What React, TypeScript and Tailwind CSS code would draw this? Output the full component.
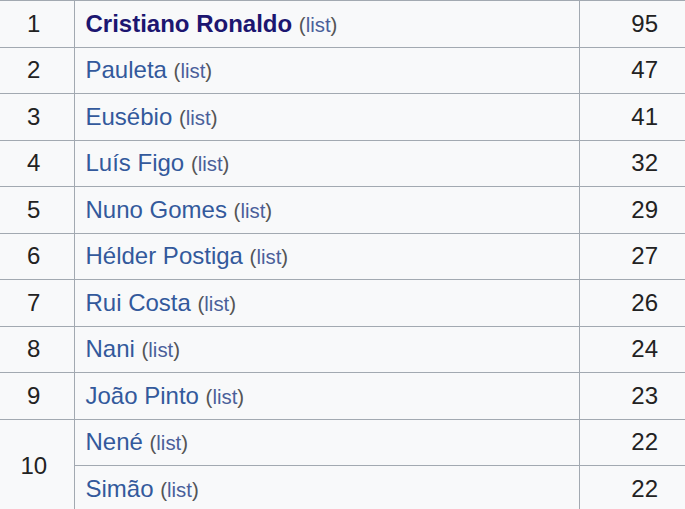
import React from 'react';

type Scorer = { rank?: number; span?: number; name: string; goals: number; bold?: boolean };

const scorers: Scorer[] = [
    { rank: 1, name: 'Cristiano Ronaldo', goals: 95, bold: true },
    { rank: 2, name: 'Pauleta', goals: 47 },
    { rank: 3, name: 'Eusébio', goals: 41 },
    { rank: 4, name: 'Luís Figo', goals: 32 },
    { rank: 5, name: 'Nuno Gomes', goals: 29 },
    { rank: 6, name: 'Hélder Postiga', goals: 27 },
    { rank: 7, name: 'Rui Costa', goals: 26 },
    { rank: 8, name: 'Nani', goals: 24 },
    { rank: 9, name: 'João Pinto', goals: 23 },
    { rank: 10, span: 2, name: 'Nené', goals: 22 },
    { name: 'Simão', goals: 22 },
];

const App: React.FC = () => {
    return (
        <div className="w-[685px] h-[509px] overflow-hidden bg-[#f8f9fa] font-['Liberation_Sans',Arial,sans-serif] text-[24px] text-[#222]">
            <table className="border-collapse w-[685px] table-fixed">
                <colgroup>
                    <col className="w-[74px]" />
                    <col className="w-[505px]" />
                    <col className="w-[106px]" />
                </colgroup>
                <tbody>
                    {scorers.map((s) => (
                        <tr key={s.name} className="h-[46.5px]">
                            {s.rank !== undefined && (
                                <td
                                    rowSpan={s.span ?? 1}
                                    className="border-t border-b border-r border-[#a2a9b1] text-center align-middle p-0 pr-[6px]"
                                >
                                    {s.rank}
                                </td>
                            )}
                            <td className="border border-[#a2a9b1] pl-[11px] align-middle whitespace-nowrap">
                                <a className={s.bold ? 'font-bold text-[#1c1670]' : 'text-[#33599c]'}>{s.name}</a>{' '}
                                <span className="text-[20.4px] text-[#555]">
                                    (<a className="text-[#4a5f9a]">list</a>)
                                </span>
                            </td>
                            <td className="border-t border-b border-l border-[#a2a9b1] text-right pr-[27px] align-middle">
                                {s.goals}
                            </td>
                        </tr>
                    ))}
                </tbody>
            </table>
        </div>
    );
};

export default App;
